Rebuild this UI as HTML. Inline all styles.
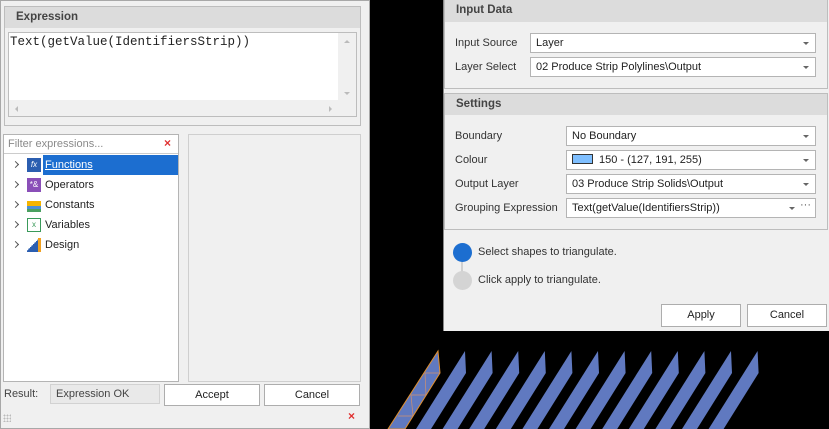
<!DOCTYPE html>
<html><head><meta charset="utf-8"><style>
*{box-sizing:border-box;margin:0;padding:0}
body{width:829px;height:429px;background:#000;position:relative;overflow:hidden;font-family:"Liberation Sans",sans-serif;font-size:11px;color:#222}
.a{position:absolute}
.hdr{background:#dcdcdc;font-weight:bold;color:#444;font-size:11.5px;padding-left:11px;line-height:21px}
.box{background:#fff;border:1px solid #b4b4b4}
.combo{position:absolute;background:#fff;border:1px solid #b4b4b4;height:20px;line-height:18px;padding-left:5px}
.combo:after{content:"";position:absolute;right:6px;top:8px;border-left:3px solid transparent;border-right:3px solid transparent;border-top:3px solid #666}
.combo.g:after{right:20px}
.lbl{position:absolute;line-height:20px;color:#333}
.btn{position:absolute;background:#fff;border:1px solid #adadad;text-align:center;line-height:20px;color:#222}
.ti{position:absolute;left:0;height:20px;line-height:20px;width:175px}
.ti .ar{position:absolute;left:9px;top:7px;width:5px;height:5px;border-right:1.3px solid #555;border-top:1.3px solid #555;transform:rotate(45deg)}
.ti .ic{position:absolute;left:23px;top:3px;width:14px;height:14px}
.ti .t{position:absolute;left:45px}
</style></head><body>
<div class="a" style="left:0;top:0;width:370px;height:429px;background:#f0f0f0;border:1px solid #a8a8a8"></div>
<div class="a" style="left:4px;top:6px;width:357px;height:120px;border:1px solid #bdbdbd;background:#f0f0f0"></div>
<div class="a hdr" style="left:5px;top:7px;width:355px;height:21px">Expression</div>
<div class="a" style="left:8px;top:32px;width:349px;height:85px;border:1px solid #bdbdbd;background:#f0f0f0"></div>
<div class="a" style="left:9px;top:33px;width:329px;height:67px;background:#fff;font-family:'Liberation Mono',monospace;font-size:12.5px;color:#222;padding:2px 0 0 1px">Text(getValue(IdentifiersStrip))</div>
<div class="a" style="left:344px;top:40px;border-left:3px solid transparent;border-right:3px solid transparent;border-bottom:3px solid #bbb"></div>
<div class="a" style="left:344px;top:92px;border-left:3px solid transparent;border-right:3px solid transparent;border-top:3px solid #bbb"></div>
<div class="a" style="left:15px;top:106px;border-top:3px solid transparent;border-bottom:3px solid transparent;border-right:3px solid #bbb"></div>
<div class="a" style="left:329px;top:106px;border-top:3px solid transparent;border-bottom:3px solid transparent;border-left:3px solid #bbb"></div>

<div class="a box" style="left:3px;top:134px;width:176px;height:248px"></div>
<div class="a" style="left:8px;top:137px;color:#8a8a8a;line-height:14px">Filter expressions...</div>
<div class="a" style="left:164px;top:136px;color:#e03030;font-weight:bold;font-size:12px">×</div>
<div class="a" style="left:4px;top:153px;width:174px;border-top:1px solid #ccc"></div>
<div class="a" style="left:4px;top:154px;width:174px;height:226px">
 <div class="ti" style="top:1px"><span class="ar"></span><span class="ic" style="background:#2b5eb0;color:#fff;font-size:8px;font-style:italic;text-align:center;line-height:14px">fx</span><div class="a" style="left:39px;top:0;width:135px;height:20px;background:#1c6ed0"></div><span class="t" style="color:#fff;text-decoration:underline;left:41px">Functions</span></div>
 <div class="ti" style="top:21px"><span class="ar"></span><span class="ic" style="background:#8a4fb8;color:#fff;font-size:8px;text-align:center;line-height:14px">*&amp;</span><span class="t" style="left:41px">Operators</span></div>
 <div class="ti" style="top:41px"><span class="ar"></span><span class="ic" style="background:linear-gradient(#0000 0,#0000 3px,#f4b400 3px,#f4b400 8px,#4b8fd6 8px,#4b8fd6 11px,#4aa060 11px)"></span><span class="t" style="left:41px">Constants</span></div>
 <div class="ti" style="top:61px"><span class="ic" style="border:1.5px solid #3a9a5a;color:#3a9a5a;font-size:8px;text-align:center;line-height:11px">x</span><span class="ar"></span><span class="t" style="left:41px">Variables</span></div>
 <div class="ti" style="top:81px"><span class="ar"></span><span class="ic" style="background:linear-gradient(135deg,#0000 50%,#2b5eb0 50%);border-right:3px solid #f0a020"></span><span class="t" style="left:41px">Design</span></div>
</div>
<div class="a" style="left:188px;top:134px;width:173px;height:248px;border:1px solid #cfcfcf;background:#f0f0f0"></div>

<div class="a" style="left:4px;top:384px;line-height:20px;color:#444">Result:</div>
<div class="a" style="left:50px;top:384px;width:110px;height:20px;background:#e9e9e9;border:1px solid #d2d2d2;padding-left:5px;line-height:18px;color:#444">Expression OK</div>
<div class="btn" style="left:164px;top:384px;width:96px;height:22px">Accept</div>
<div class="btn" style="left:264px;top:384px;width:96px;height:22px">Cancel</div>
<div class="a" style="left:348px;top:409px;color:#e03030;font-weight:bold;font-size:12px">×</div>
<div class="a" style="left:3px;top:414px;width:8px;height:8px;background-image:radial-gradient(#bbb 40%,transparent 45%);background-size:3px 3px"></div>

<svg class="a" style="left:0;top:0" width="829" height="429">
<g fill="#6079c0">
<polygon points="465,351 466,373 431,429 416,429"/><polygon points="491.6,351 492.6,373 457.6,429 442.6,429"/><polygon points="518.2,351 519.2,373 484.2,429 469.2,429"/><polygon points="544.8,351 545.8,373 510.8,429 495.8,429"/><polygon points="571.4,351 572.4,373 537.4,429 522.4,429"/><polygon points="598,351 599,373 564,429 549,429"/><polygon points="624.6,351 625.6,373 590.6,429 575.6,429"/><polygon points="651.2,351 652.2,373 617.2,429 602.2,429"/><polygon points="677.8,351 678.8,373 643.8,429 628.8,429"/><polygon points="704.4,351 705.4,373 670.4,429 655.4,429"/><polygon points="731,351 732,373 697,429 682,429"/><polygon points="757.6,351 758.6,373 723.6,429 708.6,429"/>
<polygon points="438,351 440,373 405,429 388,429" stroke="#e09030" stroke-width="1"/>
</g>
<g stroke="#d09070" stroke-width="0.7" fill="none"><path d="M425,373 L440,373 M411,395 L426,395 M398,416 L413,416 M425,373 L426,395 L411,395 L413,416"/></g>
</svg>

<div class="a" style="left:443px;top:0;width:386px;height:331px;background:#f0f0f0;border-left:1px solid #888"></div>
<div class="a" style="left:444px;top:0;width:384px;height:89px;border:1px solid #bdbdbd"></div>
<div class="a hdr" style="left:445px;top:0;width:382px;height:22px">Input Data</div>
<div class="lbl" style="left:455px;top:33px">Input Source</div>
<div class="combo" style="left:530px;top:33px;width:286px">Layer</div>
<div class="lbl" style="left:455px;top:57px">Layer Select</div>
<div class="combo" style="left:530px;top:57px;width:286px">02 Produce Strip Polylines\Output</div>

<div class="a" style="left:444px;top:93px;width:384px;height:137px;border:1px solid #bdbdbd"></div>
<div class="a hdr" style="left:445px;top:94px;width:382px;height:21px">Settings</div>
<div class="lbl" style="left:455px;top:126px">Boundary</div>
<div class="combo" style="left:566px;top:126px;width:250px">No Boundary</div>
<div class="lbl" style="left:455px;top:150px">Colour</div>
<div class="combo" style="left:566px;top:150px;width:250px"><span style="display:inline-block;width:21px;height:10px;background:#7fbfff;border:1px solid #333;vertical-align:-1px;margin-right:6px"></span>150 - (127, 191, 255)</div>
<div class="lbl" style="left:455px;top:174px">Output Layer</div>
<div class="combo" style="left:566px;top:174px;width:250px">03 Produce Strip Solids\Output</div>
<div class="lbl" style="left:455px;top:198px">Grouping Expression</div>
<div class="combo g" style="left:566px;top:198px;width:250px">Text(getValue(IdentifiersStrip))<span style="position:absolute;right:4px;top:-3px;color:#555">···</span></div>
<div class="a" style="left:461px;top:258px;width:2px;height:16px;background:#d0d0d0"></div>
<div class="a" style="left:453px;top:243px;width:19px;height:19px;border-radius:50%;background:#1c6ed0"></div>
<div class="a" style="left:453px;top:271px;width:19px;height:19px;border-radius:50%;background:#d4d4d4"></div>
<div class="lbl" style="left:478px;top:242px;color:#333">Select shapes to triangulate.</div>
<div class="lbl" style="left:478px;top:270px;color:#333">Click apply to triangulate.</div>
<div class="btn" style="left:661px;top:304px;width:80px;height:23px">Apply</div>
<div class="btn" style="left:747px;top:304px;width:80px;height:23px">Cancel</div>
</body></html>
